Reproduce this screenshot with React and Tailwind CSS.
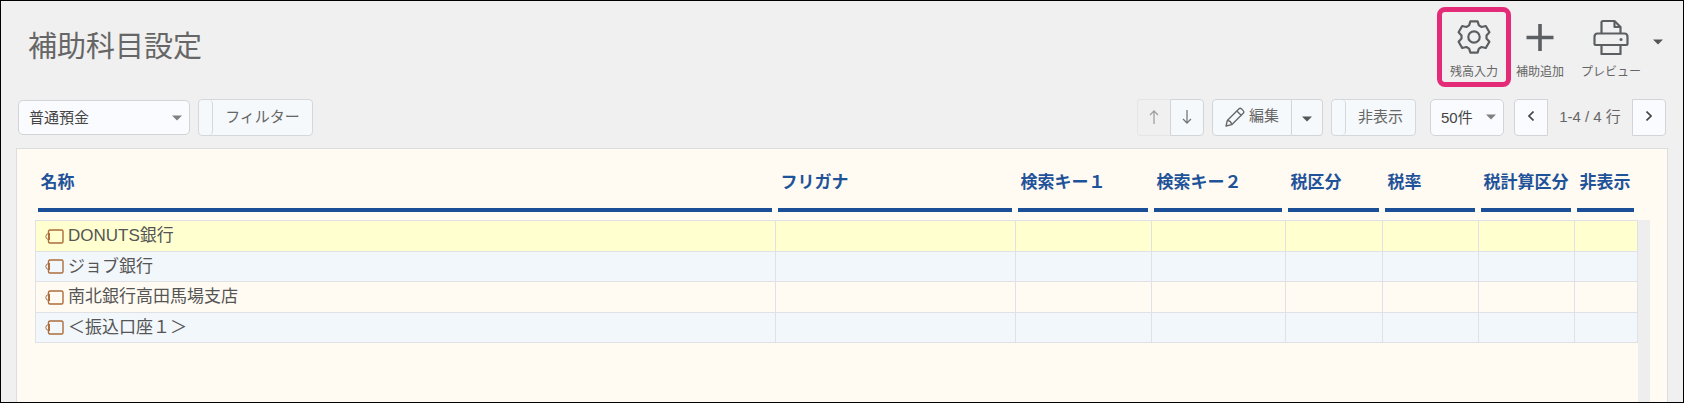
import React from "react";

const columns = [
  { label: "名称", width: "" },
  { label: "フリガナ", width: "w-[240px]" },
  { label: "検索キー１", width: "w-[136px]" },
  { label: "検索キー２", width: "w-[134px]" },
  { label: "税区分", width: "w-[97px]" },
  { label: "税率", width: "w-24" },
  { label: "税計算区分", width: "w-24" },
  { label: "非表示", width: "w-[63px]" },
];

const rows = [
  { name: "DONUTS銀行", bg: "bg-[#ffffcf]" },
  { name: "ジョブ銀行", bg: "bg-[#f2f7fb]" },
  { name: "南北銀行高田馬場支店", bg: "bg-[#fffbf3]" },
  { name: "＜振込口座１＞", bg: "bg-[#f2f7fb]" },
];

function GearIcon() {
  return (
    <svg viewBox="0 0 34 34" className="size-[34px]" fill="none" stroke="currentColor" strokeWidth="2.200" strokeLinejoin="round" aria-hidden="true">
      <path d="M12.100 5.400L13.400 1.300H20.600L21.900 5.400L24.600 7L28.800 6L32.400 12.300L29.500 15.400V18.600L32.400 21.700L28.800 28L24.600 27L21.900 28.600L20.600 32.700H13.400L12.100 28.600L9.400 27L5.200 28L1.600 21.700L4.500 18.600V15.400L1.600 12.300L5.200 6L9.400 7z" />
      <circle cx="17" cy="17" r="5.700" />
    </svg>
  );
}

function PlusIcon() {
  return (
    <svg viewBox="0 0 34 34" className="size-[34px]" fill="none" stroke="currentColor" strokeWidth="3.600" aria-hidden="true">
      <path d="M17 4v27M3.500 17.500h27" />
    </svg>
  );
}

function PrinterIcon() {
  return (
    <svg viewBox="0 0 36 36" className="size-9" fill="none" stroke="currentColor" strokeWidth="2.200" strokeLinejoin="round" aria-hidden="true">
      <path d="M8.500 14V3.500Q8.500 2 10 2H21.500L27.500 8V14" />
      <path d="M21.500 2V8H27.500" />
      <path d="M4.500 14.500H31.500Q34.500 14.500 34.500 18V25Q34.500 26 33.500 26H2.500Q1.500 26 1.500 25V18Q1.500 14.500 4.500 14.500z" />
      <path d="M8.500 26V35H27.500V26" />
      <circle cx="28" cy="20.500" r="1.500" fill="currentColor" stroke="none" />
    </svg>
  );
}

function PencilIcon() {
  return (
    <svg viewBox="0 0 20 20" className="size-5" fill="none" stroke="currentColor" strokeWidth="1.300" strokeLinejoin="round" aria-hidden="true">
      <path d="M1 19L2.300 13.500L13.800 2Q15.200 .6 16.600 2L18.200 3.600Q19.500 5 18.200 6.300L6.700 17.700z" />
      <path d="M11.800 4L16.200 8.300M2.300 13.500Q6 13.800 6.700 17.700" />
    </svg>
  );
}

function Caret({ className = "" }) {
  return (
    <svg viewBox="0 0 10 6" className={`h-[6px] w-[10px] ${className}`} fill="currentColor" aria-hidden="true">
      <path d="M0 .5h10L5 5.500z" />
    </svg>
  );
}

function AccountIcon() {
  return (
    <svg viewBox="0 0 19 15" className="h-[15px] w-[19px] shrink-0" fill="none" stroke="#ac6e3c" aria-hidden="true">
      <path d="M3.500 5V2.500Q3.500 1 5 1H16.500Q18 1 18 2.500V12.500Q18 14 16.500 14H5Q3.500 14 3.500 12.500V10" strokeWidth="1.400" />
      <path d="M3.500 4.500Q.8 5 .8 7.500T3.500 10.500z" />
      <path d="M4 4v7" strokeWidth="2" />
    </svg>
  );
}

function SelectBox({ label, value, className, caretClassName }) {
  return (
    <div className="relative">
      <select
        aria-label={label}
        defaultValue={value}
        className={`block appearance-none rounded-[5px] border border-[#d2d4d8] bg-[#fafbff] pt-[2px] text-[15px] text-[#444] ${className}`}
      >
        <option>{value}</option>
      </select>
      <Caret className={`pointer-events-none absolute text-[#808080] ${caretClassName}`} />
    </div>
  );
}

// 左端にON/OFFの表示がつくボタン
function ToggleButton({ children, className }) {
  return (
    <button className={`flex h-[37px] overflow-hidden rounded border border-[#d5d8da] bg-[#f5f9fb] text-[15px] leading-[34px] text-[#666] ${className}`}>
      <span className="h-full w-[14px] shrink-0 rounded border-r border-[#d5d8da]" />
      <span className="flex-1">{children}</span>
    </button>
  );
}

export default function App() {
  return (
    <div className="flex min-h-screen flex-col border border-black bg-[#f0f0f0] font-['Liberation_Sans','Noto_Sans_CJK_JP',sans-serif] text-[#555]">
      {/* ヘッダー */}
      <header className="flex h-[98px] items-start justify-between pt-[6px] pr-5 pl-[27px]">
        <h1 className="mt-5 text-[29px] leading-10 font-normal text-[#666]">補助科目設定</h1>
        <div className="flex text-xs leading-4 text-[#666]">
          <button className="flex h-20 w-[74px] flex-col items-center rounded-lg border-5 border-[#e42b78] pt-2">
            <span className="text-[#5c5f61]"><GearIcon /></span>
            <span className="mt-[10px]">残高入力</span>
          </button>
          <button className="flex h-20 w-[58px] flex-col items-center pt-[13px]">
            <span className="text-[#5c5f61]"><PlusIcon /></span>
            <span className="mt-[10px]">補助追加</span>
          </button>
          <button className="flex h-20 w-[84px] flex-col items-center pt-3">
            <span className="text-[#5c5f61]"><PrinterIcon /></span>
            <span className="mt-[9px]">プレビュー</span>
          </button>
          <button className="flex h-[69px] items-center" aria-label="プレビューのメニュー">
            <Caret className="text-[#555]" />
          </button>
        </div>
      </header>

      {/* ツールバー */}
      <div className="flex items-center justify-between px-[17px]">
        <div className="flex items-center gap-2">
          <SelectBox label="勘定科目" value="普通預金" className="h-[35px] w-[172px] pl-[10px]" caretClassName="top-[15px] right-2" />
          <ToggleButton className="w-[115px]">フィルター</ToggleButton>
        </div>

        <div className="flex items-center">
          <div className="flex h-[37px] text-[15px]">
            <button disabled aria-label="上へ" className="flex w-[33px] items-center justify-center rounded-l border border-r-0 border-[#e5e5e5] pb-[2px] text-[#a0a0a0]">
              <svg viewBox="0 0 10 14" className="h-[14px] w-[10px]" fill="none" stroke="currentColor" strokeWidth="1.300" aria-hidden="true">
                <path d="M5 14V1M1 5l4-4 4 4" />
              </svg>
            </button>
            <button aria-label="下へ" className="flex w-[34px] items-center justify-center rounded-r border border-[#d2d5d8] bg-[#f5f9fb] pb-[2px] text-[#777]">
              <svg viewBox="0 0 10 14" className="h-[14px] w-[10px]" fill="none" stroke="currentColor" strokeWidth="1.300" aria-hidden="true">
                <path d="M5 0v13M1 9l4 4 4-4" />
              </svg>
            </button>
          </div>
          <div className="ml-2 flex h-[37px]">
            <button className="flex w-20 items-center justify-center gap-1 rounded-l border border-[#d2d5d8] bg-[#f5f9fb] pb-[2px] text-[15px] text-[#666]">
              <PencilIcon />
              編集
            </button>
            <button aria-label="編集メニュー" className="flex w-[31px] items-center justify-center rounded-r border border-l-0 border-[#d2d5d8] bg-[#f5f9fb] pt-[2px]">
              <Caret className="text-[#555]" />
            </button>
          </div>
          <ToggleButton className="ml-2 w-[85px]">非表示</ToggleButton>
          <SelectBox label="表示件数" value="50件" className="ml-[14px] h-[37px] w-[74px] pl-[10px]" caretClassName="top-[15px] right-2" />
          <button aria-label="前のページ" className="ml-[10px] flex h-[37px] w-[34px] items-center justify-center rounded-l border border-[#d2d4d8] bg-[#fafbff] pb-1">
            <svg viewBox="0 0 6 10" className="h-[10px] w-[6px]" fill="none" stroke="#444" strokeWidth="1.600" aria-hidden="true">
              <path d="M5.500 .5L1 5l4.500 4.500" />
            </svg>
          </button>
          <span className="w-[84px] text-center text-[15px] text-[#666]">1-4 / 4 行</span>
          <button aria-label="次のページ" className="flex h-[37px] w-[34px] items-center justify-center rounded-r border border-[#d2d4d8] bg-[#fafbff] pb-1">
            <svg viewBox="0 0 6 10" className="h-[10px] w-[6px]" fill="none" stroke="#444" strokeWidth="1.600" aria-hidden="true">
              <path d="M.5 .5L5 5 .5 9.500" />
            </svg>
          </button>
        </div>
      </div>

      {/* 一覧 */}
      <main className="mx-[15px] mt-3 flex flex-1 border border-b-0 border-[#dcdddf] bg-[#fffbf3] pr-[17px] pl-[18px]">
        <div className="flex-1">
          <table className="w-full table-fixed border-collapse">
            <thead>
              <tr>
                {columns.map((col) => (
                  <th key={col.label} className={`pt-[22px] pr-1 pb-2 pl-[2px] text-left text-[17px] leading-6 font-bold whitespace-nowrap text-[#1f5399] ${col.width}`}>
                    <div className="border-b-4 border-[#1a4f98] pb-[13px] pl-[3px]">{col.label}</div>
                  </th>
                ))}
              </tr>
            </thead>
            <tbody>
              {rows.map((row) => (
                <tr key={row.name} className={`h-[31px] even:h-[30px] ${row.bg}`}>
                  <td className="border border-[#e0e1e4] py-0 pl-[9px] text-[17px] leading-7">
                    <div className="flex items-center gap-1">
                      <AccountIcon />
                      {row.name}
                    </div>
                  </td>
                  {columns.slice(1).map((col) => (
                    <td key={col.label} className="border border-[#e0e1e4]" />
                  ))}
                </tr>
              ))}
            </tbody>
          </table>
        </div>
        <div className="mt-[71px] w-3 bg-[#eee]" />
      </main>
    </div>
  );
}
